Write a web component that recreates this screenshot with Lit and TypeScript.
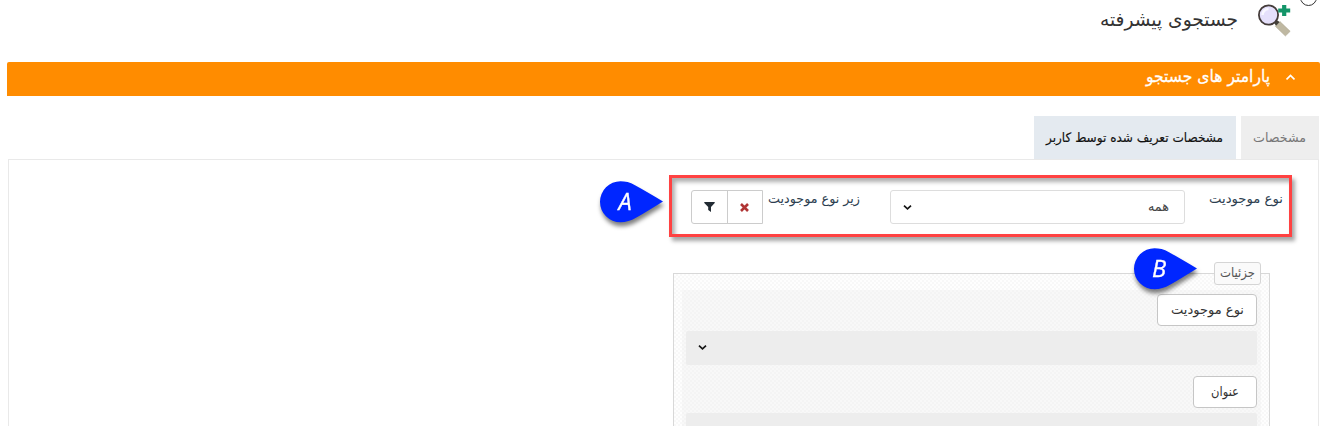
import { LitElement, html, css, svg } from "lit";
import { customElement, property } from "lit/decorators.js";

/** A right-to-left label whose line is fitted to a set width. */
@customElement("fit-label")
class FitLabel extends LitElement {
  @property() text = "";
  @property({ type: Number }) w = 50;
  @property({ type: Number }) size = 13;
  @property({ type: Number }) stroke = 0;
  static styles = css`
    :host { display: block; flex: none; }
    svg { display: block; overflow: visible; }
    text { font-family: "DejaVu Sans", sans-serif; fill: currentColor; stroke: currentColor; direction: rtl; }
  `;
  render() {
    return html`<svg width=${this.w} height="20" viewBox="0 0 ${this.w} 20">
      ${svg`<text x=${this.w} y="14" font-size=${this.size} stroke-width=${this.stroke} textLength=${this.w} lengthAdjust="spacingAndGlyphs">${this.text}</text>`}
    </svg>`;
  }
}

@customElement("callout-pin")
class CalloutPin extends LitElement {
  @property() letter = "";
  static styles = css`
    :host { display: block; width: 64px; height: 42px; }
    svg { display: block; overflow: visible; filter: drop-shadow(1px 4px 2px rgba(0, 0, 0, 0.5)); }
    text { font: italic 23.5px "Open Sans", "Noto Sans", sans-serif; fill: #fff; stroke: #fff; stroke-width: .3; text-anchor: middle; }
  `;
  render() {
    return html`<svg width="64" height="42" viewBox="0 0 64 42">
      <path d="M63 20.5 C53 14.5 43 8.5 35 4.2 C30 1.3 25 .3 20.5 .3 A20.5 20.5 0 0 0 20.5 41.3 C26 41.3 31 39.7 36 36.8 C44 32.3 53 26.6 63 20.5Z" fill="#0026ff" />
      <text x="25" y="29">${this.letter}</text>
    </svg>`;
  }
}

@customElement("app-root")
class AppRoot extends LitElement {
  static styles = css`
    :host { display: block; position: relative; width: 1324px; height: 426px; overflow: hidden; background: #fff; direction: rtl; color: #2c3e50; }
    * { box-sizing: border-box; }
    svg { display: block; flex: none; }
    .title { display: flex; height: 62px; padding-right: 33px; color: #333; gap: 19px; }
    .title fit-label { margin-top: 12px; }
    .title svg { margin-top: 3px; }
    .status { position: absolute; right: 7px; top: -11px; width: 17px; height: 17px; border: 1px solid #333; border-radius: 50%; }
    .bar { height: 34px; margin: 0 4px 0 7px; padding: 5px 25px 0 0; background: #ff8c00; border-radius: 2px 2px 0 0; color: #fff; display: flex; gap: 16px; }
    .bar fit-label { margin-top: 1px; }
    .tabs { display: flex; gap: 5px; height: 43px; margin: 20px 5px 0 8px; }
    .tab { height: 43px; background: #eee; color: #777; padding: 12px 13px 0 12px; }
    .tab.user { background: #e4eaf0; color: #111; padding-left: 12px; }
    .panel { margin: 0 5px 0 8px; height: 267px; border: 1px solid #e9e9e9; border-bottom: 0; padding: 15px 26px 0 0; }
    .filters { display: flex; width: 623px; height: 62px; border: 3px solid #ff4242; box-shadow: 3px 4px 4px rgba(0,0,0,.35), inset 3px 4px 4px rgba(0,0,0,.32); padding: 12px 6px 0 0; }
    .select { display: flex; justify-content: space-between; width: 295px; height: 34px; margin: 0 24px 0 30px; padding: 6px 15px 0 12px; border: 1px solid #ddd; border-radius: 3px; color: #444; }
    .select svg, .field svg { margin-top: 6px; }
    .buttons { display: flex; direction: ltr; width: 72px; height: 34px; margin-right: 5px; border: 1px solid #ccc; border-radius: 3px 0 0 3px; }
    .buttons span { display: grid; place-items: center; flex: 1; }
    .buttons span + span { border-left: 1px solid #ccc; }
    .filters > fit-label { margin-top: -1px; }
    .details { width: 597px; height: 160px; margin: 36px 22px 0 0; border: 1px solid #d8d8d8; border-bottom: 0; padding: 0 8px;
      background: conic-gradient(#f8f8f8 25%, #fefefe 0 50%, #f8f8f8 0 75%, #fefefe 0) 0 0 / 4px 4px; }
    .legend { width: 47px; height: 23px; margin-top: -12px; padding: 0 5px; border: 1px solid #d5d5d5; border-radius: 3px; background: #fafafa; color: #555; }
    .group { height: 142px; margin-top: 5px; padding: 4px 4px 0; background: conic-gradient(#f4f4f4 25%, #f8f8f8 0 50%, #f4f4f4 0 75%, #f8f8f8 0) 0 0 / 4px 4px; }
    .chip { width: max-content; height: 32px; padding: 5px 12px 0 13px; border: 1px solid #c6c6c6; border-radius: 4px; background: #fff; color: #333; }
    .chip.name { padding: 5px 17px 0; }
    .field { height: 34px; margin: 5px 0 11px; padding: 6px 0 0 12px; background: #ededed; border-radius: 2px; display: flex; justify-content: flex-end; }
    .pin-a { position: absolute; left: 600px; top: 181px; }
    .pin-b { position: absolute; left: 1134px; top: 248px; }
  `;

  private chevron() {
    return html`<svg width="9" height="9" viewBox="0 0 9 9"><path d="M1 2.7 4.5 5.9 8 2.7" fill="none" stroke="#151515" stroke-width="1.7" /></svg>`;
  }

  render() {
    return html`
      <div class="status"></div>
      <header class="title">
        <svg width="34" height="35" viewBox="0 0 34 35">
          <path d="M18.3 23.3 23 18.6 33.2 28.3 28.4 33Z" fill="#bfb8a2" stroke="#aaa48f" stroke-width=".5" />
          <path d="M16.5 19 19 16.5 22.7 19 19 22.7Z" fill="#444039" />
          <circle cx="11.5" cy="12" r="9.6" fill="#e5e0fb" stroke="#443c3a" stroke-width="1.8" />
          <path d="M5.5 12a6 6 0 0 1 6-6" stroke="#f8f7ff" stroke-width="2.5" fill="none" />
          <path d="M25.1 2h4.2v3.6h3.9v4h-3.9v3.4h-4.2V9.6h-3.9v-4h3.9z" fill="#149569" />
        </svg>
        <fit-label text="جستجوی پیشرفته" w="138" size="19.5"></fit-label>
      </header>
      <div class="bar">
        <svg width="9" height="20" viewBox="0 0 9 20"><path d="M.5 12.4 4.5 8.4l4 4" fill="none" stroke="#fff" stroke-width="1.8" /></svg>
        <fit-label text="پارامتر های جستجو" w="124" size="16.5" stroke=".3"></fit-label>
      </div>
      <nav class="tabs">
        <div class="tab"><fit-label text="مشخصات" w="53"></fit-label></div>
        <div class="tab user"><fit-label text="مشخصات تعریف شده توسط کاربر" w="177" stroke=".15"></fit-label></div>
      </nav>
      <main class="panel">
        <section class="filters">
          <fit-label text="نوع موجودیت" w="74"></fit-label>
          <div class="select"><fit-label text="همه" w="21"></fit-label>${this.chevron()}</div>
          <fit-label text="زیر نوع موجودیت" w="92"></fit-label>
          <div class="buttons">
            <span><svg width="11" height="10" viewBox="0 0 11 10"><path d="M.3 0h10.4v1L7 5v5L4.2 8V5L.3 1z" fill="#222b33" /></svg></span>
            <span><svg width="9" height="9" viewBox="0 0 9 9"><path d="M1 1 8 8M8 1 1 8" stroke="#b03535" stroke-width="2.6" /></svg></span>
          </div>
        </section>
        <section class="details">
          <div class="legend"><fit-label text="جزئیات" w="35"></fit-label></div>
          <div class="group">
            <div class="chip"><fit-label text="نوع موجودیت" w="73"></fit-label></div>
            <div class="field">${this.chevron()}</div>
            <div class="chip name"><fit-label text="عنوان" w="28"></fit-label></div>
            <div class="field"></div>
          </div>
        </section>
      </main>
      <callout-pin class="pin-a" letter="A"></callout-pin>
      <callout-pin class="pin-b" letter="B"></callout-pin>
    `;
  }
}
